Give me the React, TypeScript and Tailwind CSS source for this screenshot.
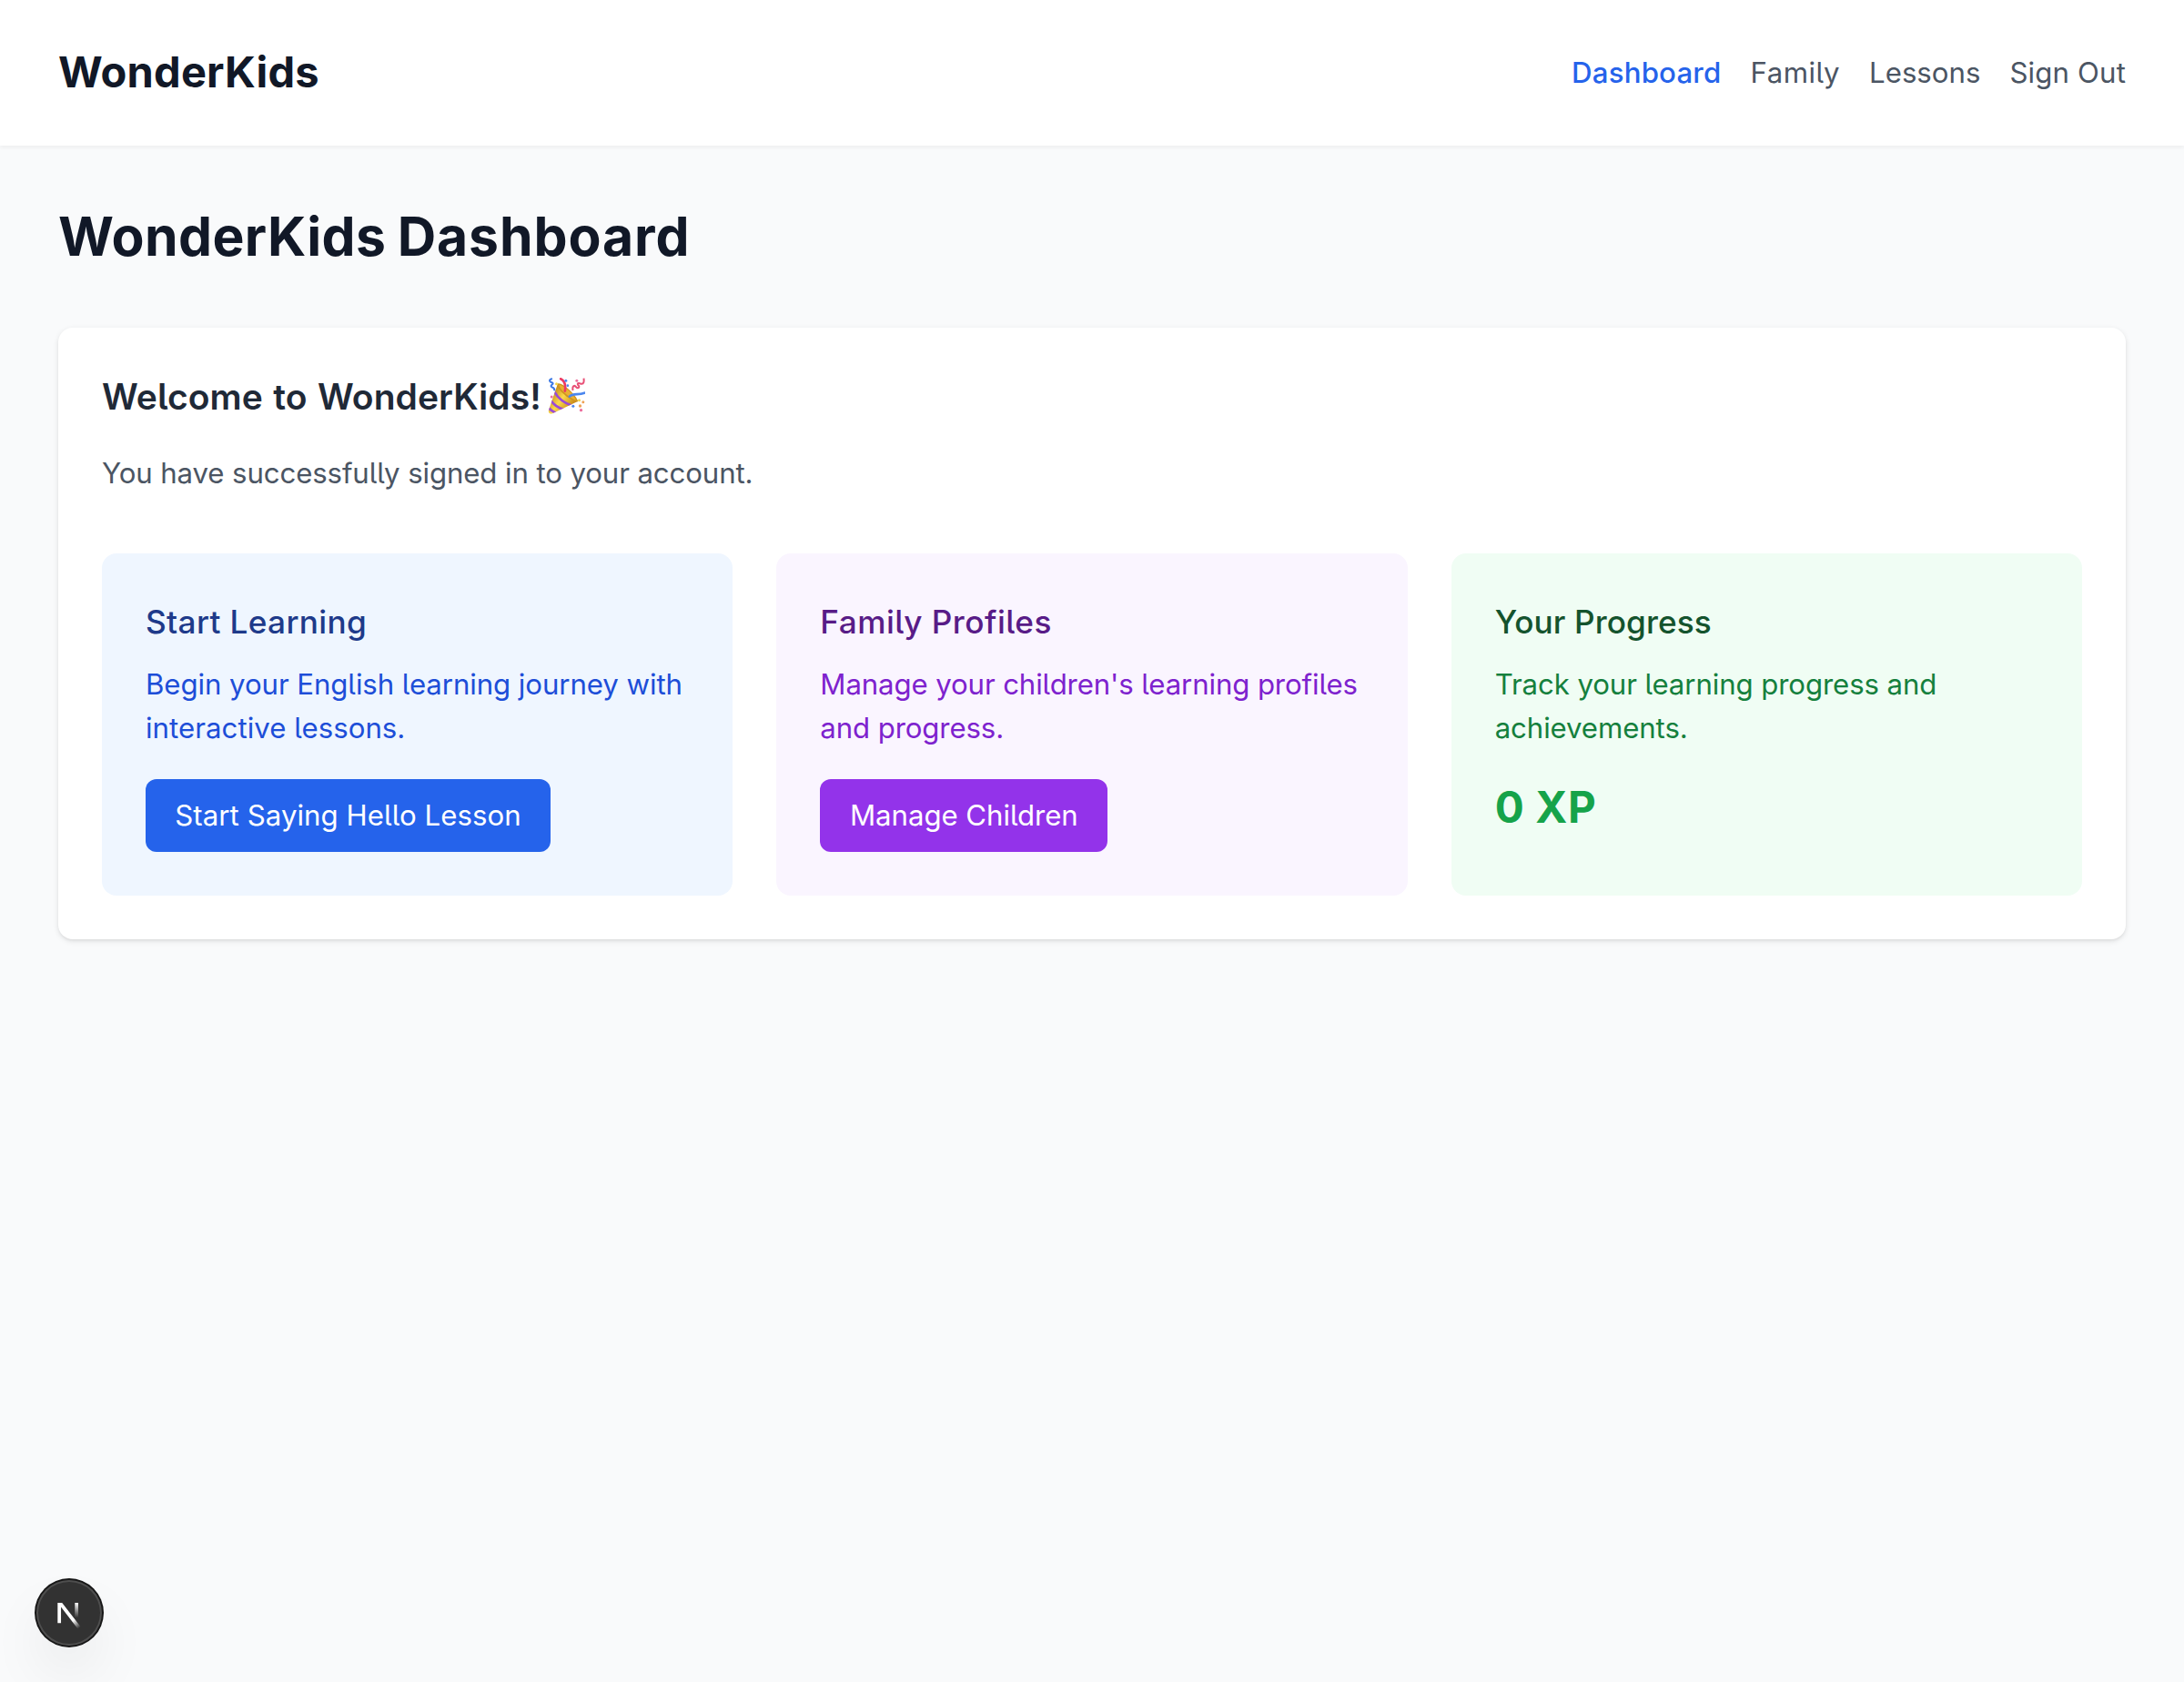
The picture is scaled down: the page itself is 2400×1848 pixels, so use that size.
import React from "react";

function PartyPopper() {
  return (
    <svg viewBox="0 0 120 120" className="mb-0.5 -ml-px h-10 w-[41px] shrink-0" role="img" aria-label="Party popper">
      <defs>
        <linearGradient id="cone" x1="8" y1="60" x2="70" y2="105" gradientUnits="userSpaceOnUse">
          <stop offset="0" stopColor="#c9921f" />
          <stop offset="0.45" stopColor="#fbd94a" />
          <stop offset="1" stopColor="#c98a18" />
        </linearGradient>
        <clipPath id="cone-clip">
          <path d="M31 20 L1 108 Q0 122 14 118 L97 78 Q62 66 31 20Z" />
        </clipPath>
      </defs>
      <path d="M31 20 L1 108 Q0 122 14 118 L97 78 Q62 66 31 20Z" fill="url(#cone)" />
      <g clipPath="url(#cone-clip)" fill="none" stroke="#9a4bd6" strokeWidth="8">
        <path d="M20 46 Q38 78 78 92" />
        <path d="M8 74 Q22 96 54 106" />
        <path d="M0 98 Q8 108 26 117" />
      </g>
      <path d="M31 20 C42 12 92 56 98 78 C82 84 24 38 31 20Z" fill="#cf9420" />
      <path d="M36 24 C50 24 84 54 91 74 C74 68 38 42 36 24Z" fill="#e9b033" />
      <path d="M41 4 C54 10 58 24 55 44" fill="none" stroke="#ee3a62" strokeWidth="8" strokeLinecap="round" />
      <path d="M70 62 C82 50 98 58 119 50" fill="none" stroke="#4a86ee" strokeWidth="8" strokeLinecap="round" />
      <path d="M13 3 C-2 8 6 14 13 16 C22 20 2 25 12 31 C18 33 22 36 20 43" fill="none" stroke="#3b78e4" strokeWidth="6" />
      <path d="M81 42 C78 24 88 25 91 30 C99 38 106 30 98 24 C94 16 102 17 107 20 C119 22 118 10 117 2" fill="none" stroke="#e84f76" strokeWidth="6" />
      <g fill="#4a86ee">
        <circle cx="58" cy="10" r="4.5" />
        <circle cx="64" cy="26" r="4" />
        <circle cx="82" cy="94" r="4.5" />
      </g>
      <g fill="#ec6f9e">
        <circle cx="11" cy="63" r="4.5" />
        <circle cx="94" cy="10" r="4.5" />
        <circle cx="108" cy="107" r="5" />
      </g>
      <g fill="#f3d548">
        <circle cx="27" cy="20" r="4.5" />
        <circle cx="102" cy="74" r="4.5" />
      </g>
      <g fill="#eea356">
        <circle cx="115" cy="80" r="4.5" />
        <circle cx="105" cy="93" r="5" />
      </g>
    </svg>
  );
}

function DevBadge() {
  return (
    <button
      aria-label="Open developer tools"
      className="fixed bottom-10 left-10 size-[72px] rounded-full bg-[#323232] shadow-[0_0_0_2px_#171717,inset_0_0_0_2px_rgba(255,255,255,0.14),0_32px_64px_-8px_rgba(0,0,0,0.1)]"
    >
      <svg viewBox="0 0 36 36" className="size-[72px]" fill="none">
        <defs>
          <linearGradient id="diag" x1="9.955" y1="11.12" x2="15.48" y2="17.97" gradientUnits="userSpaceOnUse">
            <stop stopColor="white" />
            <stop offset="0.604" stopColor="white" stopOpacity="0" />
            <stop offset="1" stopColor="white" stopOpacity="0" />
          </linearGradient>
          <linearGradient id="stem" x1="11.82" y1="1.4" x2="11.8" y2="9.63" gradientUnits="userSpaceOnUse">
            <stop stopColor="white" />
            <stop offset="1" stopColor="white" stopOpacity="0" />
          </linearGradient>
          <clipPath id="mark">
            <rect x="0" y="1.4" width="18" height="18" />
          </clipPath>
        </defs>
        <g transform="translate(10.25 11.05)" clipPath="url(#mark)" strokeWidth="1.86">
          <path d="M13.3 15.2 L2.34 1 V12.6" stroke="url(#diag)" strokeMiterlimit="10" />
          <path d="M11.825 1.5 V13.1" stroke="url(#stem)" />
        </g>
      </svg>
    </button>
  );
}

export default function App() {
  return (
    <div className="min-h-screen bg-[#f9fafb] font-['Inter','Liberation_Sans',sans-serif] text-[31.2px] leading-[48px] antialiased [font-feature-settings:'cv05']">
      <header className="flex h-40 items-center justify-between bg-white px-16 shadow-[0_2px_4px_0_rgba(0,0,0,0.05)]">
        <span className="pb-0.5 text-[47px] leading-[64px] font-bold tracking-[0.185px] text-[#111827]">WonderKids</span>
        <nav className="flex gap-8 text-[#4b5563]">
          <a className="font-medium tracking-[0.2px] text-[#2563eb]">Dashboard</a>
          <a className="tracking-[0.5px]">Family</a>
          <a>Lessons</a>
          <a className="tracking-[0.15px]">Sign Out</a>
        </nav>
      </header>

      <main className="px-16 pt-16">
        <h1 className="mb-16 text-[58.8px] leading-[72px] font-bold tracking-[0.4px] text-[#111827] [word-spacing:-2px]">
          WonderKids <span className="tracking-[0.92px]">Dashboard</span>
        </h1>

        <section className="rounded-2xl bg-white p-12 shadow-[0_2px_6px_0_rgba(0,0,0,0.1),0_2px_4px_-2px_rgba(0,0,0,0.1)]">
          <h2 className="mb-8 flex h-14 items-center gap-2 text-[39px] leading-[56px] font-semibold tracking-[0.05px] text-[#1f2937] [word-spacing:1.6px]">
            Welcome to WonderKids!
            <PartyPopper />
          </h2>
          <p className="mb-16 tracking-[-0.11px] text-[#4b5563]">You have successfully signed in to your account.</p>

          <div className="grid grid-cols-3 gap-12">
            <article className="h-[376px] rounded-2xl bg-[#eff6ff] p-12">
              <h3 className="mb-[18px] text-[35.2px] leading-[54px] font-medium tracking-[0.34px] text-[#1e3a8a]">Start Learning</h3>
              <p className="mb-8 tracking-[-0.07px] text-[#1d4ed8]">
                Begin your English learning journey with <span className="tracking-[0.04px]">interactive lessons.</span>
              </p>
              <button className="flex h-20 w-[445px] items-center justify-center rounded-xl bg-[#2563eb] tracking-[0.06px] text-white">
                Start Saying Hello Lesson
              </button>
            </article>

            <article className="h-[376px] rounded-2xl bg-[#faf5ff] p-12">
              <h3 className="mb-[18px] text-[35.2px] leading-[54px] font-medium tracking-[0.491px] text-[#581c87]">Family Profiles</h3>
              <p className="mb-8 tracking-[-0.12px] text-[#7e22ce]">
                Manage your children's learning profiles and progress.
              </p>
              <button className="flex h-20 w-[316px] items-center justify-center rounded-xl bg-[#9333ea] tracking-[-0.06px] text-white">
                Manage Children
              </button>
            </article>

            <article className="h-[376px] rounded-2xl bg-[#f0fdf4] p-12">
              <h3 className="mb-[18px] text-[35.2px] leading-[54px] font-medium tracking-[0.1px] text-[#14532d]">Your Progress</h3>
              <p className="mb-8 tracking-[-0.1px] text-[#15803d]">
                Track your learning progress and achievements.
              </p>
              <p className="text-[47.5px] leading-[62px] font-bold tracking-[0.7px] text-[#16a34a]">0 XP</p>
            </article>
          </div>
        </section>
      </main>

      <DevBadge />
    </div>
  );
}
